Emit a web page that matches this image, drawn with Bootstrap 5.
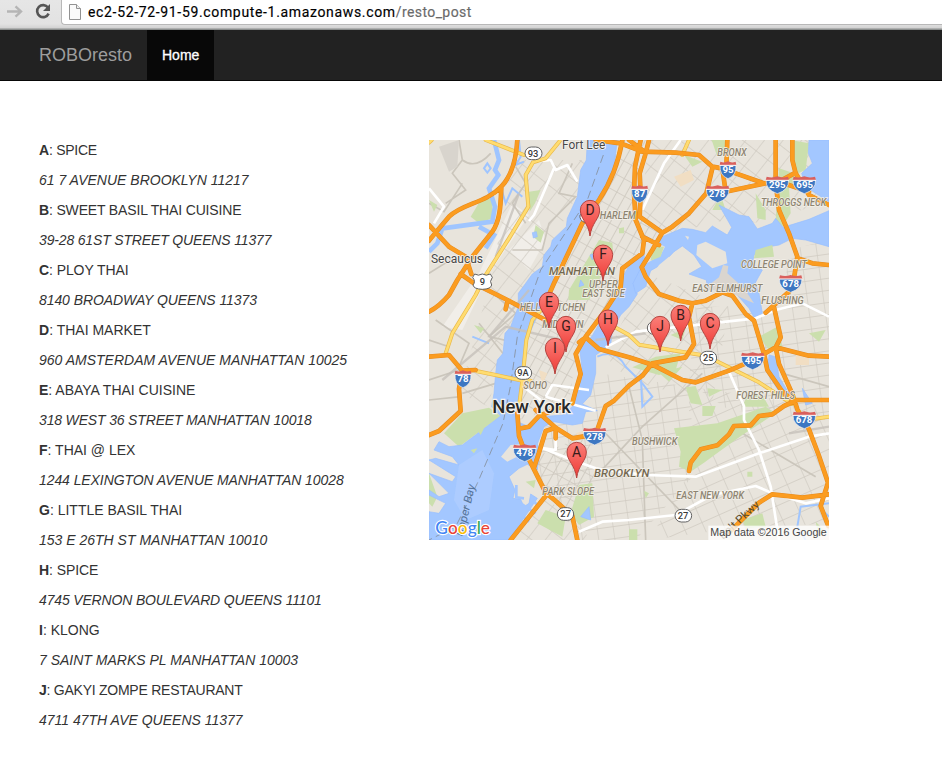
<!DOCTYPE html>
<html lang="en">
<head>
<meta charset="utf-8">
<meta name="viewport" content="width=device-width, initial-scale=1">
<title>ROBOresto</title>
<link href="https://cdn.jsdelivr.net/npm/bootstrap@5.3.0/dist/css/bootstrap.min.css" rel="stylesheet">
<style>
body{font-family:"Liberation Sans",Arial,sans-serif;font-size:14px;line-height:20px;color:#333;background:#fff;overflow:hidden}
.chrome-bar{height:30px;background:linear-gradient(#e6e6e6 0,#e2e2e2 24px,#d2d2d2 28px,#8b8e8d 29px);}
.tool-icons{width:61px}
.address{height:25px;background:#fff;border:1px solid #b8b8b8;border-top:0;border-right:0;border-radius:0 0 0 4px;padding-left:7px}
.address-text{font:14px/20px Roboto,sans-serif;color:#000;white-space:nowrap;letter-spacing:.66px;margin-left:7px;-webkit-text-stroke:.15px}
.address-text span{color:#6a6a6a;letter-spacing:.4px}
.site-nav{height:51px;background:#222;border-bottom:1px solid #080808;padding:0 0 0 39px}
.site-nav .navbar-brand{font-size:18px;line-height:20px;color:#9d9d9d;width:93px;margin-right:15px;white-space:nowrap}
.site-nav .navbar-nav .nav-link{background:#080808;color:#fff;padding:15px;height:50px;width:67px;-webkit-text-stroke:.3px #fff}
.main-area{padding:59px 0 0 39px}
.listing{width:390px}
.listing p{margin:0 0 10px;white-space:nowrap}
.listing .tight{letter-spacing:-.16px}
.listing .snug{letter-spacing:-.08px}
.listing .close{letter-spacing:-.25px}
.map{width:400px;height:400px;display:block}
</style>
<script src="https://cdn.jsdelivr.net/npm/bootstrap@5.3.0/dist/js/bootstrap.bundle.min.js"></script>
</head>
<body>
<header class="chrome-bar d-flex">
<div class="tool-icons flex-shrink-0">
<svg width="61" height="26" viewBox="0 0 61 26" fill="none"><path d="M7 11.5H20M15.5 6.3L21 11.5L15.5 16.7" stroke="#b5b5b5" stroke-width="2.4"/><path d="M48 7.6A6 6 0 1 0 48.6 13.6" stroke="#555" stroke-width="2.6"/><path d="M50 4V11H43Z" fill="#555"/></svg>
</div>
<div class="address flex-grow-1 d-flex align-items-center">
<svg width="12" height="16" viewBox="0 0 12 16"><path d="M.5 .5H7.5L11.5 4.5V15.5H.5Z" fill="#fafafa" stroke="#929292"/><path d="M7.5 .5V4.5H11.5" fill="#eee" stroke="#929292"/></svg>
<div class="address-text">ec2-52-72-91-59.compute-1.amazonaws.com<span>/resto_post</span></div>
</div>
</header>
<nav class="navbar navbar-expand site-nav">
<a class="navbar-brand py-0" href="#">ROBOresto</a>
<ul class="navbar-nav"><li class="nav-item"><a class="nav-link" href="#">Home</a></li></ul>
</nav>
<main class="main-area d-flex align-items-start">
<section class="listing flex-shrink-0">
<p class="close"><b>A</b>: SPICE</p><p><i>61 7 AVENUE BROOKLYN 11217</i></p>
<p class="tight"><b>B</b>: SWEET BASIL THAI CUISINE</p><p class="tight"><i>39-28 61ST STREET QUEENS 11377</i></p>
<p class="snug"><b>C</b>: PLOY THAI</p><p class="snug"><i>8140 BROADWAY QUEENS 11373</i></p>
<p><b>D</b>: THAI MARKET</p><p><i>960 AMSTERDAM AVENUE MANHATTAN 10025</i></p>
<p><b>E</b>: ABAYA THAI CUISINE</p><p class="tight"><i>318 WEST 36 STREET MANHATTAN 10018</i></p>
<p><b>F</b>: THAI @ LEX</p><p class="snug"><i>1244 LEXINGTON AVENUE MANHATTAN 10028</i></p>
<p><b>G</b>: LITTLE BASIL THAI</p><p><i>153 E 26TH ST MANHATTAN 10010</i></p>
<p class="snug"><b>H</b>: SPICE</p><p class="tight"><i>4745 VERNON BOULEVARD QUEENS 11101</i></p>
<p><b>I</b>: KLONG</p><p><i>7 SAINT MARKS PL MANHATTAN 10003</i></p>
<p class="close"><b>J</b>: GAKYI ZOMPE RESTAURANT</p><p><i>4711 47TH AVE QUEENS 11377</i></p>
</section>
<svg class="map flex-shrink-0" viewBox="0 0 1200 1200" font-family="Roboto, sans-serif">
<defs>
<pattern id="pm" width="27" height="46" patternUnits="userSpaceOnUse" patternTransform="rotate(29)"><path d="M0 0H27M0 0V46" stroke="#cdc8be" stroke-width="5" fill="none"/></pattern>
<pattern id="pa" width="44" height="58" patternUnits="userSpaceOnUse" patternTransform="rotate(38)"><path d="M0 0H44M0 0V58" stroke="#cfcac1" stroke-width="4" fill="none"/></pattern>
<pattern id="pb" width="48" height="36" patternUnits="userSpaceOnUse" patternTransform="rotate(-8)"><path d="M0 0H48M0 0V36" stroke="#cfcac1" stroke-width="4" fill="none"/></pattern>
<pattern id="pc" width="56" height="46" patternUnits="userSpaceOnUse" patternTransform="rotate(-24)"><path d="M0 0H56M0 0V46" stroke="#cfcac1" stroke-width="4" fill="none"/></pattern>
<linearGradient id="pinfill" x2="0" y2="1"><stop stop-color="#fb7f79"/><stop offset="1" stop-color="#ee3a35"/></linearGradient>
<g id="pin"><path d="M0 78C-5 38-29 27-29 0A29 29 0 0 1 29 0C29 27 5 38 0 78Z" fill="url(#pinfill)" stroke="#b5443f" stroke-width="3"/></g>
<g id="shield"><path d="M-24-14H24Q26 18 0 27Q-26 18-24-14Z" fill="#3d77c2" stroke="#f3f3f3" stroke-width="2"/><path d="M-23-24Q-11-19 0-25Q11-19 23-24L25-13H-25Z" fill="#d9605d"/><path d="M-25-13H25" stroke="#fff" stroke-width="3"/></g>
<g id="shieldw"><path d="M-34-14H34Q35 16 0 27Q-35 16-34-14Z" fill="#3d77c2" stroke="#f3f3f3" stroke-width="2"/><path d="M-32-24Q-15-19 0-25Q15-19 32-24L35-13H-35Z" fill="#d9605d"/><path d="M-35-13H35" stroke="#fff" stroke-width="3"/></g>
</defs>
<rect width="1200" height="1200" fill="#e8e4dc"/>
<path d="M250 190L300 225L180 402L100 570L40 560L150 400ZM240 330L330 240L350 300L300 390Z" fill="#f1eee9"/>
<!-- local street grids -->
<path d="M565 0H650L615 220L700 270L600 402L500 580L440 650L420 790L270 840L290 590L400 390L520 150Z" fill="url(#pm)"/>
<path d="M655 0H1200V180L1010 250L890 240L790 265L720 290L640 240Z" fill="url(#pa)"/>
<path d="M250 60H470L440 170L370 310L310 430L210 640L180 800L90 760L130 620L190 400Z" fill="url(#pa)"/>
<path d="M650 400L900 500L850 790L600 720L530 650Z" fill="url(#pa)"/>
<path d="M800 500H1200V840L900 810L780 730Z" fill="url(#pb)"/>
<path d="M1080 330L1200 300V500H1060Z" fill="url(#pb)"/>
<path d="M510 700L780 740L800 1000L620 1200H450L360 1060L310 970L350 850Z" fill="url(#pb)"/>
<path d="M780 740L1200 800V1150L880 1170L660 1200L780 1000Z" fill="url(#pc)"/>
<path d="M320 950L480 880L500 1030L420 1150L350 1050Z" fill="url(#pm)"/>
<path d="M240 1200L350 1070L490 1200Z" fill="url(#pa)"/>
<g fill="none" stroke="#cbc6bc" stroke-width="5"><path d="M90 0L100 60L70 100L110 150L50 190M100 60Q140 90 185 40M0 190L45 215L100 130M0 400L80 350M260 80L290 130L250 190L290 250M430 70L390 160L440 170L360 250L340 330L250 330M20 540L120 610L90 680M0 720L90 690M0 600L60 620M160 430L260 520L180 590L270 610M150 550L230 650M100 760L200 730M0 780L95 770M520 870L780 1140M500 1010L640 860L820 700M600 740L640 900L650 1200M1060 700L1200 740M940 880L1160 1010"/></g>
<!-- parks -->
<g fill="#cbdfad"><path d="M155 180L190 175V235L150 250L125 230ZM300 155L335 150L318 190L302 215ZM320 255L345 275L335 308L312 290ZM510 300L550 308L552 330L480 480L418 480L420 450ZM0 180L25 195L15 215ZM765 45L820 65L790 80ZM875 165L890 210H850ZM980 160L1010 210V240L985 235ZM1050 85L1110 105L1080 145L1085 220L1060 260L1040 240ZM848 0H900V20L865 50ZM1085 0L1140 10L1130 90L1095 105ZM610 682L680 650L755 640L740 690L690 705ZM690 698L760 680L720 725ZM735 865L865 850L1010 800L1040 820L940 885L870 935L825 968L785 995L750 980L755 935ZM450 1035L490 1030L495 1130L450 1155L425 1120ZM350 1110L410 1130L400 1190L325 1150ZM100 820L180 803L215 828L90 920L45 880ZM820 798H860L850 828H820ZM770 742L800 738L820 795L785 790ZM955 765H1000L1020 800L940 800ZM1140 580L1190 570L1170 605ZM990 590L1045 560L1060 620L1020 630ZM725 585L770 565L760 600ZM645 1052L660 1060L650 1075ZM955 995H970V1010H955ZM290 1025L320 1020L315 1045ZM0 1000L25 1070L10 1100L0 1090ZM940 1140L1000 1120L1010 1160L950 1165ZM600 1168H625V1200H600ZM1160 1145L1185 1170L1170 1195ZM135 555L165 565L155 580ZM835 745L880 750L840 770ZM570 265L585 262V280H570Z"/></g>
<g fill="#e4e1d8"><path d="M30 20L90 0L85 80L60 95Z" fill="#d8d4cd"/><path d="M735 110L785 90L795 120L755 140ZM1100 645L1140 640V675H1100ZM440 880L470 870L460 900ZM330 690L355 700L340 735Z" fill="#f1dec3"/></g>
<!-- rivers, sound and bay -->
<g fill="#a3c7ff" stroke="#97beff" stroke-width="2" stroke-linejoin="round">
<path d="M475 0L472 60L455 90L450 130L445 170L415 235L412 260L370 300L365 320L345 345L340 380L310 402L290 430L268 460L268 500L245 560L228 580L222 640L205 660L200 700L195 760L188 800L215 828L100 915L60 920L30 905L15 930L70 950L90 975L20 955L0 960L80 1010L70 1025L0 1000L60 1060L30 1070L0 1050V1065L50 1090L30 1120L0 1115V1200H240L325 1075L305 1062L300 1090L285 1100L275 1078L252 1075L258 1050L240 1010L270 985L295 973L325 990L332 930L325 912L345 860L375 845L430 855L460 850L470 815L505 812L460 792L485 765L500 700V645L545 615L550 570L575 525L600 500L625 462L612 430L635 390L670 350L650 290L642 340L605 370L575 420L560 460L540 500L488 590L452 625L462 710L440 752L430 800L400 825L340 830L300 860L265 845L273 780L285 700L290 610L325 525L365 450L375 402L410 340L480 230L550 120L565 0Z"/>
<path d="M640 282L680 305L700 290L760 265L790 268L830 278L850 258L895 285L908 262L870 195L930 225L960 230L985 267L1030 250L1040 235L1062 262L1140 238L1200 212V320L1130 300L1090 295L1050 315L1020 320L975 345L970 372L1000 390L978 430L990 460L1000 520L975 532L960 505L920 460L895 445L860 450L835 442L832 420L780 402L818 380L795 345L760 318L735 335L700 372L665 392L650 440L620 460L612 430L640 375Z"/>
<path d="M1140 0H1200V185L1160 160L1130 140L1118 100L1150 70L1138 40Z"/>
<path d="M1020 645L1040 650L1050 710L1080 760L1060 770L1015 700ZM1120 745L1150 790L1130 795Z"/>
<path d="M455 1130L480 1100L485 1140ZM310 278L322 275L325 290L313 294ZM483 345L495 340L490 360ZM455 420L465 435L450 440Z"/>
</g>
<g fill="none" stroke="#9fc5ff"><path d="M195 0L210 60L198 90L208 105L180 145L198 200L190 245L40 265L25 310L0 335M150 260L195 285L170 325" stroke-width="14"/><path d="M175 70L185 85L175 98L165 85ZM270 0L275 50L260 75L285 65M215 140L230 190L250 145L280 170M505 650Q560 625 590 680L640 730L670 770L640 800L635 700M1200 1090L1115 1100L1105 1160L1130 1200M180 610L130 590M1170 1100L1200 1130" stroke-width="6"/></g>
<g fill="#e8e4dc"><path d="M805 315L830 305L890 335L895 370L850 385L802 345ZM690 375L720 350L770 360L765 395L720 402L680 390ZM768 287L780 290L777 300ZM216 950L245 915L285 912L285 940L235 965ZM600 350L615 345L585 395L578 390ZM640 285L708 320L695 345L650 372Z"/><path d="M670 320L705 320L695 350L665 362ZM145 870L165 865L155 885ZM125 930L145 925L135 940ZM980 330L1030 315L1035 350L975 355Z" fill="#cbdfad"/><path d="M820 450L870 412L882 375L898 378L895 400L945 445L975 490L940 475L890 450Z" fill="#dad5cf"/></g>
<path d="M90 975L160 930L195 1000L180 1110L110 1140L75 1080Z" fill="#b2d0ff" opacity=".65"/>
<path d="M262 1035V1072L285 1075M275 1090L320 1120M260 1110L300 1145M310 1080L330 1100" fill="none" stroke="#a3c7ff" stroke-width="8"/>
<path d="M523 45L475 180L335 390L265 590L245 735L222 850L145 1030L80 1160L0 1200" fill="none" stroke="#8b99ad" stroke-width="3" stroke-dasharray="25 13"/>
<!-- white connector roads -->
<g fill="none" stroke="#fff" stroke-width="8" stroke-linejoin="round"><path d="M0 145L45 200L15 250M310 65L365 60L380 90L415 75L445 125M375 85L315 225L300 243M755 0L705 70L640 210M530 622L620 575L980 535L1040 510L1120 490L1200 530M900 695L945 798L945 840L990 930L1025 1040L1050 1200M330 920L430 960L500 985L650 1005L800 1010L990 940L1140 890L1200 880M600 1140L740 1125L850 1065L980 1038L1020 1055L1130 1090L1200 1075M450 1175L520 1145L600 1140M290 745L335 780M350 770L370 735L480 750M350 770L500 812M390 790M380 900V930L345 925"/></g>
<path d="M40 720L230 560L400 600M180 590L300 450M270 160L200 350M1080 880L1200 860M500 600L650 580" fill="none" stroke="#c5c1ba" stroke-width="7" opacity=".8"/>
<!-- yellow arterials -->
<g fill="none" stroke-linejoin="round" stroke-linecap="round"><g stroke="#e9b84a" stroke-width="12"><path id="yr" d="M170 0L285 45M395 0L350 55L312 67L290 105L298 200L240 295L172 402L140 465L70 580L50 640M345 500L310 540L292 600L280 722L270 800M145 694L210 707L280 722L305 722M555 560L600 585L630 614L830 647L900 682L990 727L1090 792M780 0L760 45M0 8L8 0M1130 840L1200 830"/></g><use href="#yr" stroke="#ffdc70" stroke-width="8"/></g>
<!-- orange highways -->
<g fill="none" stroke-linejoin="round" stroke-linecap="round"><g stroke="#e58a1f" stroke-width="14"><path id="or" d="M265 0C262 60 245 110 217 140C170 190 100 190 60 230C30 265 10 290 0 302M217 140C215 190 215 240 190 275L130 350L85 420L60 465Q30 500 0 515M0 255L60 320L110 350L127 402M95 402L135 430L235 480L340 535L362 550M235 485L230 508M580 0C570 60 550 120 510 180L460 250L415 345L375 430L355 475M500 0L575 10L640 35L740 38L810 45L850 80L880 85L920 100L1005 130L1045 128M600 0L650 38M890 155L1010 130M660 0L650 40L632 100L635 160L632 230L700 278M635 0L618 80L615 160L620 240L645 300L640 340L580 385L575 440L530 510L470 590L440 642L455 702L440 752L430 790M400 800L330 828L300 860L270 866M640 290L690 315M895 0L892 80L880 85L890 155M850 85L832 160L780 220L730 260L700 278L670 330L638 382L650 410L690 462L750 482L790 490L830 482L880 457L910 467L950 522L975 542L1005 642L1015 690L1060 755L1090 780M1040 0V130L1050 210L1080 280L1105 350L1095 415L1080 455L1010 518M1105 355L1150 370L1200 375M1090 0V60L1100 100L1140 165L1200 195M1100 98L1050 125L1140 155M1035 502L1055 592L1040 622L1050 672L1090 762L1105 808L1140 868L1170 948L1197 1028L1175 1098L1198 1158M450 607L470 592L510 627L600 652L670 674L760 720L800 727L900 692L970 662L1040 622L1140 647L1200 650M750 482L790 490L780 532L795 612L770 652L670 670L640 707L600 737L555 782L530 798L500 883L430 895L380 863L350 873L330 938L315 983M265 818L270 888L285 928L350 1058L380 1083L430 1128L445 1200M350 1068L245 1200M320 810L380 863V895M0 650L60 645L100 692L90 747L95 813L30 873L0 885M100 692L140 690M780 993L785 968L815 928L865 916L900 883L915 858L965 856L990 828L1030 823L1065 798L1105 780L1200 780M900 1178L990 1088L1030 1063L1120 1073L1200 1063"/></g><use href="#or" stroke="#fb9c20" stroke-width="11"/></g>
<!-- area labels -->
<g font-style="italic" font-weight="500" font-size="30" fill="#8d8471" stroke="#f3f0e9" stroke-width="4" paint-order="stroke">
<text lengthAdjust="spacingAndGlyphs" x="865" y="49" textLength="88">BRONX</text><text lengthAdjust="spacingAndGlyphs" x="512" y="238" textLength="108">HARLEM</text><text lengthAdjust="spacingAndGlyphs" x="996" y="199" textLength="196">THROGGS NECK</text><text lengthAdjust="spacingAndGlyphs" x="936" y="385" textLength="198">COLLEGE POINT</text><text lengthAdjust="spacingAndGlyphs" x="480" y="445" textLength="86">UPPER</text><text lengthAdjust="spacingAndGlyphs" x="460" y="472" textLength="127">EAST SIDE</text><text lengthAdjust="spacingAndGlyphs" x="272" y="514" textLength="197">HELL'S KITCHEN</text><text lengthAdjust="spacingAndGlyphs" x="340" y="565" textLength="124">MIDTOWN</text><text lengthAdjust="spacingAndGlyphs" x="283" y="748" textLength="71">SOHO</text><text lengthAdjust="spacingAndGlyphs" x="790" y="457" textLength="210">EAST ELMHURST</text><text lengthAdjust="spacingAndGlyphs" x="997" y="493" textLength="127">FLUSHING</text><text lengthAdjust="spacingAndGlyphs" x="922" y="778" textLength="176">FOREST HILLS</text><text lengthAdjust="spacingAndGlyphs" x="609" y="916" textLength="136">BUSHWICK</text><text lengthAdjust="spacingAndGlyphs" x="340" y="1066" textLength="155">PARK SLOPE</text><text lengthAdjust="spacingAndGlyphs" x="742" y="1078" textLength="203">EAST NEW YORK</text>
<g font-size="35" fill="#736850"><text lengthAdjust="spacingAndGlyphs" x="360" y="404" textLength="198">MANHATTAN</text><text lengthAdjust="spacingAndGlyphs" x="495" y="1011" textLength="166">BROOKLYN</text></g></g>
<g fill="#484848" stroke="#f5f2ed" stroke-width="5" paint-order="stroke"><text lengthAdjust="spacingAndGlyphs" x="399" y="28" font-size="36" textLength="130">Fort Lee</text><text lengthAdjust="spacingAndGlyphs" x="6" y="370" font-size="36" textLength="156">Secaucus</text><text lengthAdjust="spacingAndGlyphs" x="190" y="818" font-size="56" font-weight="500" textLength="236" fill="#292929" stroke-width="7">New York</text><text lengthAdjust="spacingAndGlyphs" transform="translate(103 1190) rotate(-77)" font-size="34" fill="#55749b" stroke="none" textLength="158" font-style="italic">Upper Bay</text><text lengthAdjust="spacingAndGlyphs" transform="translate(882 1200) rotate(-43)" font-size="33" textLength="152" fill="#5c4b2b" stroke="none">Belt Pkwy</text></g>
<!-- route shields -->
<use href="#shield" x="897" y="89"/><use href="#shield" x="632" y="161"/><use href="#shieldw" x="866" y="161"/><use href="#shieldw" x="1045" y="134"/><use href="#shieldw" x="1126" y="134"/><use href="#shieldw" x="1085" y="430"/><use href="#shieldw" x="971" y="662"/><use href="#shield" x="102" y="716"/><use href="#shieldw" x="497" y="888"/><use href="#shieldw" x="287" y="938"/><use href="#shieldw" x="1126" y="839"/>
<g font-size="29" font-weight="700" fill="#fff" text-anchor="middle"><text x="897" y="100">95</text><text x="632" y="172">87</text><text x="864" y="172">278</text><text x="1045" y="145">295</text><text x="1127" y="145">695</text><text x="1085" y="441">678</text><text x="972" y="673">495</text><text x="102" y="727">78</text><text x="497" y="899">278</text><text x="287" y="949">478</text><text x="1125" y="850">678</text></g>
<g fill="#fff" stroke="#626262" stroke-width="3"><rect x="288" y="21" width="51" height="38" rx="19"/><rect x="258" y="680" width="50" height="38" rx="19"/><rect x="813" y="634" width="50" height="40" rx="20"/><rect x="385" y="1103" width="49" height="38" rx="19"/><rect x="738" y="1108" width="50" height="38" rx="19"/><rect x="655" y="545" width="38" height="38" rx="19"/><path d="M453 225A19 19 0 0 0 467 247L480 230L468 218Z"/><path d="M137 402Q148 409 160 402Q172 409 184 402L190 412Q180 425 188 435Q186 447 160 448Q134 447 132 435Q141 425 131 412Z"/></g>
<g font-size="28" font-weight="500" fill="#393939" text-anchor="middle"><text x="312" y="50">93</text><text x="282" y="709">9A</text><text x="838" y="664">25</text><text x="410" y="1132">27</text><text x="762" y="1137">27</text><text x="160" y="435">9</text></g>
<!-- restaurant markers -->
<g text-anchor="middle" font-size="42" fill="#391c1b"><use href="#pin" x="483" y="210"/><text x="483" y="224">D</text><use href="#pin" x="522" y="344"/><text x="522" y="358">F</text><use href="#pin" x="360" y="486"/><text x="360" y="500">E</text><use href="#pin" x="537" y="539"/><text x="537" y="553">H</text><use href="#pin" x="755" y="525"/><text x="755" y="539">B</text><use href="#pin" x="843" y="549"/><text x="843" y="563">C</text><use href="#pin" x="693" y="558"/><text x="693" y="572">J</text><use href="#pin" x="411" y="558"/><text x="411" y="572">G</text><use href="#pin" x="378" y="624"/><text x="378" y="638">I</text><use href="#pin" x="443" y="936"/><text x="443" y="950">A</text></g>
<!-- attribution -->
<text x="19" y="1181" font-size="53" font-weight="500" textLength="164" lengthAdjust="spacingAndGlyphs" font-family="Lato,sans-serif" stroke="#fff" stroke-width="7" paint-order="stroke"><tspan fill="#4285f4">G</tspan><tspan fill="#ea4335">o</tspan><tspan fill="#fbbc05">o</tspan><tspan fill="#4285f4">g</tspan><tspan fill="#34a853">l</tspan><tspan fill="#ea4335">e</tspan></text>
<rect x="838" y="1157" width="362" height="43" fill="#fff" opacity=".78"/><text x="844" y="1188" font-family="'Liberation Sans',sans-serif" font-size="33" textLength="349" lengthAdjust="spacingAndGlyphs" fill="#444">Map data ©2016 Google</text>
</svg>
</main>
</body>
</html>
